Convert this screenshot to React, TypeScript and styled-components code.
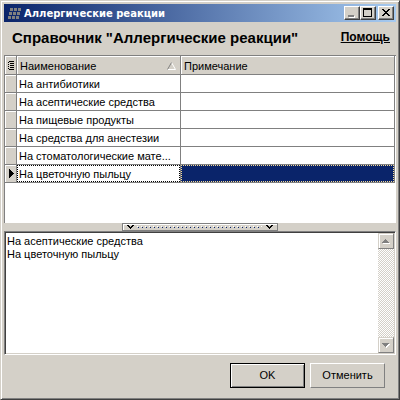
import React, { useState } from "react";
import styled, { createGlobalStyle, css } from "styled-components";

const face = "#d4d0c8";
const shadow = "#808080";
const dark = "#404040";
const navy = "#0a246a";

const GlobalStyle = createGlobalStyle`
  *, *::before, *::after { box-sizing: border-box; }
  body { margin: 0; background: ${face}; }
  body, button, textarea, table {
    font-family: "Liberation Sans", Arial, sans-serif;
    font-size: 11px;
    line-height: 13px;
    color: #000;
  }
`;

const raised = css`
  background: ${face};
  border: 1px solid;
  border-color: #fff ${dark} ${dark} #fff;
  box-shadow: inset -1px -1px ${shadow};
`;

const Window = styled.main`
  display: flex;
  flex-direction: column;
  min-height: 100vh;
  padding: 2px;
  background: ${face};
  border: 1px solid;
  border-color: ${face} ${dark} ${dark} ${face};
  box-shadow: inset 1px 1px #fff, inset -1px -1px ${shadow};
`;

const TitleBar = styled.header`
  display: flex;
  align-items: center;
  height: 18px;
  margin: 1px 1px 0;
  padding: 0 2px 0 4px;
  background: linear-gradient(90deg, ${navy}, #a6caf0);
`;

const Title = styled.div`
  flex: 1;
  margin-left: 3px;
  color: #fff;
  font-family: "DejaVu Sans", sans-serif;
  font-size: 10px;
  font-weight: bold;
  white-space: nowrap;
`;

const CaptionButton = styled.button<{ $apart?: boolean }>`
  ${raised}
  display: flex;
  width: 16px;
  height: 14px;
  padding: 0;
  margin-left: ${(p) => (p.$apart ? "2px" : "0")};
`;

const Heading = styled.div`
  display: flex;
  align-items: flex-start;
  justify-content: space-between;
  height: 33px;
  padding: 7px 7px 0 9px;
`;

const Caption = styled.h1`
  margin: 0;
  font-size: 15px;
  line-height: 18px;
  font-weight: bold;
  white-space: nowrap;
`;

const Help = styled.a`
  color: #000;
  font-size: 12px;
  line-height: 16px;
  font-weight: bold;
`;

const GridPane = styled.section`
  height: 168px;
  margin: 0 1px;
  background: #fff;
  border: solid ${shadow};
  border-width: 1px 0 0 1px;
  padding-right: 1px;
`;

const Table = styled.table`
  width: 100%;
  table-layout: fixed;
  border-collapse: separate;
  border-spacing: 0;
`;

const IndicatorCol = styled.col` width: 12px; `;
const NameCol = styled.col` width: 164px; `;

const cell = css`
  padding: 0;
  border: solid ${shadow};
  border-width: 0 1px 1px 0;
  text-align: left;
  font-weight: normal;
  white-space: nowrap;
`;

const HeadCell = styled.th`
  ${cell}
  height: 19px;
  padding: 2px 4px 0 3px;
  background: ${face};
  box-shadow: inset 1px 1px #fff;
`;

const HeadLabel = styled.span`
  display: flex;
  align-items: center;
  justify-content: space-between;
`;

const Indicator = styled.td`
  ${cell}
  height: 18px;
  padding-left: 4px;
  background: ${face};
  box-shadow: inset 1px 1px #fff;
  & > svg { display: block; }
`;

const Cell = styled.td`
  ${cell}
`;

const CellBody = styled.div<{ $focused?: boolean; $selected?: boolean }>`
  height: 17px;
  padding: 3px 0 0 2px;
  background: ${(p) => (p.$selected ? navy : "#fff")};
  ${(p) =>
    (p.$focused || p.$selected) &&
    css`
      outline: 1px dotted ${p.$selected ? "#f5db95" : "#000"};
      outline-offset: -1px;
    `}
`;

const Splitter = styled.div`
  display: flex;
  justify-content: center;
  height: 8px;
  margin: 0 1px;
`;

const SplitterGrip = styled.button`
  display: flex;
  align-items: center;
  justify-content: space-between;
  width: 40%;
  height: 8px;
  padding: 0 4px;
  background: ${face};
  border: 1px solid ${shadow};
  box-shadow: inset 1px 1px #fff;
`;

const Dots = styled.span`
  flex: 1;
  height: 2px;
  margin: 0 4px 0 3px;
  background:
    repeating-linear-gradient(90deg, transparent 0 1px, ${navy} 1px 2px, transparent 2px 4px) 0 1px / 100% 1px no-repeat,
    repeating-linear-gradient(90deg, #fff 0 1px, transparent 1px 4px) 0 0 / 100% 1px no-repeat;
`;

const MemoFrame = styled.section`
  display: flex;
  flex: 1;
  min-height: 60px;
  margin: 0 1px;
  background: #fff;
  border: 1px solid;
  border-color: ${shadow} #fff #fff ${shadow};
  box-shadow: inset 1px 1px ${dark}, inset -1px -1px ${face};
  padding: 1px;
`;

const Memo = styled.textarea`
  flex: 1;
  min-width: 0;
  margin: 0;
  padding: 2px 1px;
  border: 0;
  outline: 0;
  resize: none;
  overflow: hidden;
  background: transparent;
`;

const ScrollBar = styled.div`
  display: flex;
  flex-direction: column;
  justify-content: space-between;
  width: 16px;
  background: repeating-conic-gradient(#fff 0 25%, ${face} 0 50%) 0 0 / 2px 2px;
`;

const ScrollButton = styled.button`
  display: flex;
  width: 16px;
  height: 16px;
  padding: 0;
  background: ${face};
  border: 1px solid;
  border-color: ${face} ${shadow} ${shadow} ${face};
  box-shadow: inset 1px 1px #fff;
`;

const Footer = styled.footer`
  display: flex;
  justify-content: flex-end;
  gap: 5px;
  padding: 8px 12px 9px;
`;

const DialogButton = styled.button<{ $primary?: boolean }>`
  ${raised}
  width: 75px;
  height: 25px;
  padding: 0;
  ${(p) =>
    p.$primary
      ? css`
          border-color: #000;
          box-shadow: inset 1px 1px #fff, inset -1px -1px ${shadow};
        `
      : css`
          border-color: #fff ${shadow} ${shadow} #fff;
          box-shadow: none;
        `}
`;

const rows = [
  "На антибиотики",
  "На асептические средства",
  "На пищевые продукты",
  "На средства для анестезии",
  "На стоматологические мате...",
  "На цветочную пыльцу",
];

const AppIcon = () => (
  <svg width="13" height="11" shapeRendering="crispEdges" fill="#808080" aria-hidden="true">
    {[0, 1, 2].map((r) =>
      [0, 1, 2].map((c) => <rect key={`${r}${c}`} x={2 - r + c * 4} y={r * 4} width="3" height="3" />)
    )}
  </svg>
);

const Chevron = () => (
  <svg width="7" height="4" shapeRendering="crispEdges" aria-hidden="true">
    <path d="M0 0h2v1h1v1h1v-1h1v-1h2v1h-1v1h-1v1h-1v1h-1v-1h-1v-1h-1v-1h-1z" />
  </svg>
);

const ScrollArrow = ({ down }: { down?: boolean }) => {
  const d = down ? "M4 5h7v1h-1v1h-1v1h-1v1h-1v-1h-1v-1h-1v-1h-1z" : "M7 5h1v1h1v1h1v1h1v1h-7v-1h1v-1h1v-1h1z";
  return (
    <svg width="14" height="14" shapeRendering="crispEdges" aria-hidden="true">
      <path d={d} fill="#fff" transform="translate(0 1)" />
      <path d={d} fill="#808080" transform="translate(-1 0)" />
    </svg>
  );
};

export default function App() {
  const [current, setCurrent] = useState(5);
  const [note, setNote] = useState("На асептические средства\nНа цветочную пыльцу");
  return (
    <>
      <GlobalStyle />
      <Window>
        <TitleBar>
          <AppIcon />
          <Title>Аллергические реакции</Title>
          <CaptionButton aria-label="Свернуть" disabled>
            <svg width="14" height="12" shapeRendering="crispEdges">
              <path d="M4 9h6v2h-6z" fill="#fff" />
              <path d="M3 8h6v2h-6z" fill="#808080" />
            </svg>
          </CaptionButton>
          <CaptionButton aria-label="Развернуть">
            <svg width="14" height="12" shapeRendering="crispEdges">
              <path d="M2 1h9v9h-9zM3 3v6h7v-6z" fillRule="evenodd" />
            </svg>
          </CaptionButton>
          <CaptionButton aria-label="Закрыть" $apart>
            <svg width="14" height="12" shapeRendering="crispEdges">
              <path d="M3 2h2v1h1v1h2v-1h1v-1h2v1h-1v1h-1v1h-1v1h1v1h1v1h1v1h-2v-1h-1v-1h-2v1h-1v1h-2v-1h1v-1h1v-1h1v-1h-1v-1h-1v-1h-1z" />
            </svg>
          </CaptionButton>
        </TitleBar>
        <Heading>
          <Caption>Справочник "Аллергические реакции"</Caption>
          <Help href="#help">Помощь</Help>
        </Heading>
        <GridPane>
          <Table>
            <colgroup>
              <IndicatorCol />
              <NameCol />
              <col />
            </colgroup>
            <thead>
              <tr>
                <HeadCell aria-label="Строка">
                  <svg width="7" height="9" shapeRendering="crispEdges" aria-hidden="true">
                    <path d="M1 0h5v1h-5zM2 2h4v1h-4zM2 4h4v1h-4zM2 6h4v1h-4zM1 8h5v1h-5zM0 1h1v1h-1zM0 3h1v1h-1zM0 5h1v1h-1zM0 7h1v1h-1z" />
                  </svg>
                </HeadCell>
                <HeadCell>
                  <HeadLabel>
                    Наименование
                    <svg width="9" height="8" aria-hidden="true">
                      <path d="M4.5 0.5L8.5 7.5H0.5" fill="none" stroke="#fff" />
                      <path d="M4.5 0.5L0.5 7.5" stroke="#808080" />
                    </svg>
                  </HeadLabel>
                </HeadCell>
                <HeadCell>Примечание</HeadCell>
              </tr>
            </thead>
            <tbody>
              {rows.map((name, i) => (
                <tr key={name} onClick={() => setCurrent(i)}>
                  <Indicator>
                    {i === current && (
                      <svg width="5" height="9" shapeRendering="crispEdges" aria-hidden="true">
                        <path d="M0 0h1v1h1v1h1v1h1v1h1v1h-1v1h-1v1h-1v1h-1v1h-1z" />
                      </svg>
                    )}
                  </Indicator>
                  <Cell>
                    <CellBody $focused={i === current}>{name}</CellBody>
                  </Cell>
                  <Cell>
                    <CellBody $selected={i === current} />
                  </Cell>
                </tr>
              ))}
            </tbody>
          </Table>
        </GridPane>
        <Splitter>
          <SplitterGrip aria-label="Свернуть панель">
            <Chevron />
            <Dots />
            <Chevron />
          </SplitterGrip>
        </Splitter>
        <MemoFrame>
          <Memo aria-label="Выбранные реакции" spellCheck={false} value={note} onChange={(e) => setNote(e.target.value)} />
          <ScrollBar>
            <ScrollButton aria-label="Вверх" disabled>
              <ScrollArrow />
            </ScrollButton>
            <ScrollButton aria-label="Вниз" disabled>
              <ScrollArrow down />
            </ScrollButton>
          </ScrollBar>
        </MemoFrame>
        <Footer>
          <DialogButton $primary>OK</DialogButton>
          <DialogButton>Отменить</DialogButton>
        </Footer>
      </Window>
    </>
  );
}
